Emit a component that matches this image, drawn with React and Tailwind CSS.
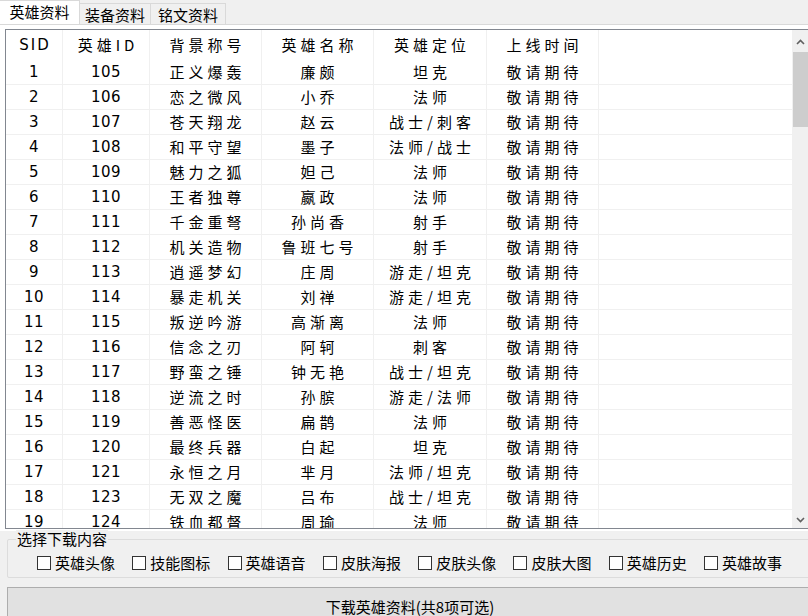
const heroes = [
  ["1", "105", "正义爆轰", "廉颇", "坦克"],
  ["2", "106", "恋之微风", "小乔", "法师"],
  ["3", "107", "苍天翔龙", "赵云", "战士/刺客"],
  ["4", "108", "和平守望", "墨子", "法师/战士"],
  ["5", "109", "魅力之狐", "妲己", "法师"],
  ["6", "110", "王者独尊", "嬴政", "法师"],
  ["7", "111", "千金重弩", "孙尚香", "射手"],
  ["8", "112", "机关造物", "鲁班七号", "射手"],
  ["9", "113", "逍遥梦幻", "庄周", "游走/坦克"],
  ["10", "114", "暴走机关", "刘禅", "游走/坦克"],
  ["11", "115", "叛逆吟游", "高渐离", "法师"],
  ["12", "116", "信念之刃", "阿轲", "刺客"],
  ["13", "117", "野蛮之锤", "钟无艳", "战士/坦克"],
  ["14", "118", "逆流之时", "孙膑", "游走/法师"],
  ["15", "119", "善恶怪医", "扁鹊", "法师"],
  ["16", "120", "最终兵器", "白起", "坦克"],
  ["17", "121", "永恒之月", "芈月", "法师/坦克"],
  ["18", "123", "无双之魔", "吕布", "战士/坦克"],
  ["19", "124", "铁血都督", "周瑜", "法师"],
];

const options = ["英雄头像", "技能图标", "英雄语音", "皮肤海报", "皮肤头像", "皮肤大图", "英雄历史", "英雄故事"];

const num = "font-['DejaVu_Sans',sans-serif] text-[15px] tracking-[0.5px]";
const cjk = "font-['Noto_Sans_CJK_SC',sans-serif] text-[15px] tracking-[4px] pl-[4px]";

function Row({ cells, header }) {
  const h = header ? "h-[30px]" : "h-[25px] border-b border-[#f0f0f0]";
  return (
    <div className={`flex ${h} items-center text-black`}>
      <div className={`w-[57px] h-full flex items-center justify-center border-r border-[#f0f0f0] ${num} ${header ? "tracking-[2px] pl-[2px]" : ""}`}>{cells[0]}</div>
      <div className={`w-[87px] h-full flex items-center justify-center border-r border-[#f0f0f0] ${header ? cjk : num}`}>{cells[1]}</div>
      <div className={`w-[112px] h-full flex items-center justify-center border-r border-[#f0f0f0] ${cjk}`}>{cells[2]}</div>
      <div className={`w-[112px] h-full flex items-center justify-center border-r border-[#f0f0f0] ${cjk}`}>{cells[3]}</div>
      <div className={`w-[113px] h-full flex items-center justify-center border-r border-[#f0f0f0] ${cjk}`}>{cells[4]}</div>
      <div className={`w-[112px] h-full flex items-center justify-center border-r border-[#f0f0f0] ${cjk}`}>{cells[5]}</div>
      <div className="flex-1" />
    </div>
  );
}

function Chevron({ up }) {
  return (
    <svg width="9" height="6" viewBox="0 0 9 6" className="text-[#606060]">
      <path d={up ? "M1 5 L4.5 1.5 L8 5" : "M1 1 L4.5 4.5 L8 1"} fill="none" stroke="currentColor" strokeWidth="1.6" />
    </svg>
  );
}

export default function App() {
  return (
    <div className="w-[808px] h-[616px] overflow-hidden bg-[#f0f0f0] font-['Noto_Sans_CJK_SC',sans-serif] text-[15px] text-black">
      {/* tabs */}
      <div className="flex items-end h-[24px] leading-none">
        <div className="w-[80px] h-[24px] bg-white border-t border-r border-[#d9d9d9] flex items-center justify-center pb-[2px]">英雄资料</div>
        <div className="w-[71px] h-[21px] bg-[#f0f0f0] border-t border-r border-[#d9d9d9] flex items-center justify-center">装备资料</div>
        <div className="w-[75px] h-[21px] bg-[#f0f0f0] border-t border-r border-[#d9d9d9] flex items-center justify-center">铭文资料</div>
      </div>

      {/* tab panel */}
      <div className="h-[507px] w-[820px] bg-white border-t border-[#d9d9d9] pl-[5px] pt-[4px]">
        <div className="w-[810px] h-[500px] border border-[#828790] flex overflow-hidden bg-white">
          <div className="w-[786px] h-full overflow-hidden">
            <Row header cells={["SID", "英雄ID", "背景称号", "英雄名称", "英雄定位", "上线时间"]} />
            {heroes.map((r) => (
              <Row key={r[0]} cells={[...r, "敬请期待"]} />
            ))}
          </div>
          <div className="w-[17px] h-full bg-[#f0f0f0] flex flex-col">
            <div className="h-[22px] flex items-center justify-center pt-[2px]">
              <Chevron up />
            </div>
            <div className="mx-[1px] h-[75px] bg-[#cdcdcd]" />
            <div className="flex-1" />
            <div className="h-[17px] flex items-center justify-center">
              <Chevron />
            </div>
          </div>
        </div>
      </div>

      {/* group box */}
      <div className="relative ml-[7px] mt-[-1px] h-[48px]">
        <div className="absolute left-0 right-[-20px] top-[9px] bottom-0 border border-[#dcdcdc] rounded-[2px]" />
        <div className="relative ml-[9px] w-fit px-[1px] bg-[#f0f0f0] leading-[18px]">选择下载内容</div>
        <div className="relative flex pl-[30px] mt-[6px] leading-[18px]">
          {options.map((o) => (
            <label key={o} className="flex items-center w-[95.3px]">
              <span className="w-[14px] h-[14px] border border-[#333333] bg-white mr-[4px]" />
              <span>{o}</span>
            </label>
          ))}
        </div>
      </div>

      {/* download button */}
      <div className="ml-[7px] mt-[9px] w-[806px] h-[40px] bg-[#e1e1e1] border border-[#adadad] flex items-center justify-center">
        下载英雄资料(共8项可选)
      </div>
    </div>
  );
}
